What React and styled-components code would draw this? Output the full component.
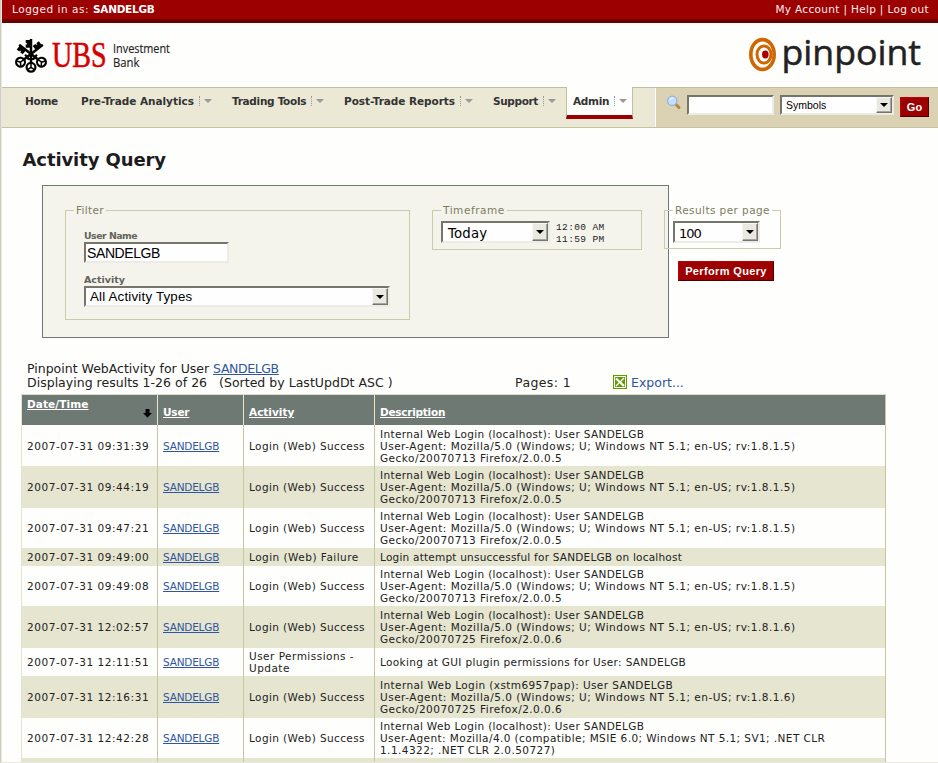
import React from "react";
import styled, { createGlobalStyle, css } from "styled-components";

const Global = createGlobalStyle`
  * { box-sizing: border-box; }
  html, body { margin: 0; background: #fefefc; overflow: hidden; }
  body { font-family: "DejaVu Sans", Verdana, sans-serif; font-size: 11px; color: #222; }
`;

const Page = styled.div`
  width: 938px;
  height: 763px;
  overflow: hidden;
  border-left: 1px solid #cfccc4;
  border-bottom: 1px solid #e9e7e1;
  box-shadow: inset 1px 0 0 #e9e7e1;
  padding-left: 1px;
  background: #fefefc;
`;

const TopBar = styled.header`
  height: 23px;
  background: #9c0000;
  border-bottom: 4px solid #6b0000;
  color: #f8eeee;
  display: flex;
  justify-content: space-between;
  padding: 0 9px 0 10px;
  line-height: 19px;
  white-space: pre;
`;
const LoggedIn = styled.div`
  font-size: 10.5px;
  letter-spacing: 0.53px;
  b { letter-spacing: -0.28px; color: #fff; }
`;
const AccountLinks = styled.div`
  font-size: 10.5px;
  letter-spacing: 0.33px;
`;

const Brand = styled.div`
  height: 64px;
  display: flex;
  justify-content: space-between;
  padding: 14px 15px 0 13px;
  svg { overflow: visible; }
`;

const Nav = styled.nav`
  height: 41px;
  display: flex;
  background: #ebe8d5;
  border-top: 1px solid #bfbf9a;
  border-bottom: 1px solid #c4c3a2;
`;
const NavItem = styled.div`
  width: ${(p) => p.$w}px;
  height: 26px;
  display: flex;
  align-items: center;
  font-weight: bold;
  font-size: 10.5px;
  line-height: 12px;
  color: #333;
  white-space: nowrap;
  letter-spacing: ${(p) => p.$ls || 0}px;
  ${(p) =>
    p.$active &&
    css`
      height: 32px;
      margin-top: -1px;
      padding: 0 0 0 6px;
      background: #fefefc;
      border: solid #bfbf9a;
      border-width: 0 1px;
      border-bottom: 4px solid #9c0000;
    `}
`;
const Dots = styled.i`
  height: 10px;
  margin-left: 5px;
  margin-right: 4px;
  border-left: 1px dotted #999;
`;
const Caret = styled.i`
  border: 4px solid transparent;
  border-top-color: #999;
  border-bottom: 0;
`;
const Search = styled.div`
  margin-left: auto;
  width: 283px;
  border-left: 1px solid #fefefc;
  background: #dbd2b3;
  display: flex;
  padding: 7px 0 0 10px;
`;
const Sunken = styled.div`
  width: ${(p) => p.$w}px;
  height: ${(p) => p.$h}px;
  flex: none;
  display: flex;
  align-items: center;
  background: #fefefe;
  border: 2px solid;
  border-color: #75756c #ecebe5 #ecebe5 #75756c;
  padding-left: ${(p) => p.$pad}px;
  font-family: "Liberation Sans", Arial, sans-serif;
  font-size: ${(p) => p.$size}px;
  line-height: 16px;
  letter-spacing: ${(p) => p.$ls || 0}px;
  color: #000;
  white-space: nowrap;
`;
const VerdanaSelect = styled(Sunken)`
  font-family: "DejaVu Sans", Verdana, sans-serif;
  > b { font-weight: normal; padding-top: 3px; }
`;
const SymbolSelect = styled(Sunken)`
  margin-left: 6px;
`;
const DropButton = styled.span`
  width: 16px;
  height: 100%;
  margin-left: auto;
  display: flex;
  align-items: center;
  justify-content: center;
  background: #e9e9e1;
  border: 1px solid;
  border-color: #f6f6f2 #75756c #75756c #f6f6f2;
  box-shadow: inset -1px -1px 0 #a5a59b;
  &::after {
    content: "";
    border: 4px solid transparent;
    border-top-color: #000;
    border-bottom: 0;
  }
`;
const RedButton = styled.button`
  width: ${(p) => p.$w}px;
  height: 20px;
  padding: 0;
  border: 1px solid;
  border-color: #c40000 #4c0000 #4c0000 #c40000;
  background: #9c0000;
  color: #fff;
  font: bold 11px/17px "Liberation Sans", Arial, sans-serif;
  letter-spacing: ${(p) => p.$ls || 0}px;
  margin: ${(p) => p.$margin};
`;

const Title = styled.h1`
  margin: 21px 0 0 20.5px;
  height: 36px;
  font-size: 18px;
  line-height: 22px;
  letter-spacing: -0.1px;
  color: #1c1c1c;
`;

const QueryArea = styled.div`
  display: flex;
  margin-left: 40px;
`;
const Panel = styled.div`
  width: 627px;
  height: 153px;
  display: flex;
  align-items: flex-start;
  gap: 22px;
  padding: 18px 0 0 22px;
  border: 1px solid #6f7973;
  background: #f4f4ec;
`;
const Group = styled.fieldset`
  width: ${(p) => p.$w}px;
  height: ${(p) => p.$h}px;
  margin: 0;
  min-width: 0;
  padding: 0 ${(p) => p.$pad}px;
  border: 1px solid #c9cbab;
  legend {
    height: 13px;
    margin-left: ${(p) => p.$legend}px;
    padding: 0 2px;
    font-size: 10.5px;
    line-height: 12px;
    color: #7d7d5c;
    letter-spacing: ${(p) => p.$ls}px;
  }
`;
const Label = styled.div`
  margin-top: ${(p) => p.$top}px;
  height: 12px;
  line-height: 12px;
  font-size: ${(p) => p.$size}px;
  font-weight: bold;
  color: #62625a;
  letter-spacing: ${(p) => p.$ls}px;
`;
const TimeRow = styled.div`
  display: flex;
  gap: 6px;
  padding-top: 4px;
`;
const Times = styled.div`
  font: 9.5px/12px "Liberation Mono", "Courier New", monospace;
  letter-spacing: 0.38px;
  color: #222;
  white-space: pre;
  padding-top: 1px;
`;
const ResultsColumn = styled.div`
  margin-left: -5px;
  padding-top: 19px;
`;

const Summary = styled.div`
  margin: 24px 0 0 25px;
  height: 32px;
  font-size: 12.5px;
  line-height: 14px;
  color: #222;
  white-space: pre;
`;
const SummaryRow = styled.div`
  display: flex;
`;
const SummaryCell = styled.span`
  width: ${(p) => p.$w}px;
  letter-spacing: ${(p) => p.$ls || 0}px;
`;
const Link = styled.a`
  color: #2d55a0;
  text-decoration: underline;
  letter-spacing: ${(p) => p.$ls || 0}px;
`;
const Export = styled.span`
  display: flex;
  gap: 4px;
  color: #2d55a0;
  svg { margin-top: -1px; }
`;

const Grid = styled.div`
  margin-left: 19px;
  width: 865px;
  border: 1px solid #c5c6a6;
  border-left-color: #e3e3cf;
  border-top-color: #dcdfc8;
`;
const Row = styled.div`
  display: grid;
  grid-template-columns: 136px 86px 131px 510px;
  height: ${(p) => p.$h}px;
  background: ${(p) => (p.$alt ? "#e5e5d0" : "#fefefc")};
`;
const Cell = styled.div`
  display: flex;
  flex-direction: column;
  justify-content: center;
  align-items: flex-start;
  padding-left: 5px;
  border-right: 1px solid #c5c6a6;
  line-height: 12px;
  font-size: 10.5px;
  color: #222;
  white-space: pre;
  letter-spacing: ${(p) => p.$ls || 0}px;
  &:last-child { border-right: 0; }
`;
const Line = styled.div`
  letter-spacing: ${(p) => p.$ls}px;
`;
const HeadRow = styled(Row)`
  background: #6f7974;
`;
const HeadCell = styled(Cell)`
  color: #fff;
  font-weight: bold;
  text-decoration: underline;
  flex-direction: row;
  justify-content: space-between;
  padding: ${(p) => (p.$sorted ? 3 : 11)}px 5px 0;
  border-right-color: #e5e5d0;
  svg { margin-top: 11px; }
`;

const rows = [
  [41, "09:31:39", "Success", "localhost", 5],
  [42, "09:44:19", "Success", "localhost", 5],
  [40, "09:47:21", "Success", "localhost", 5],
  [18, "09:49:00", "Failure", null, 0, "Login attempt unsuccessful for SANDELGB on localhost"],
  [40, "09:49:08", "Success", "localhost", 5],
  [42, "12:02:57", "Success", "localhost", 6],
  [28, "12:11:51", null, null, 0, "Looking at GUI plugin permissions for User: SANDELGB"],
  [42, "12:16:31", "Success", "xstm6957pap", 6],
  [40, "12:42:28", "Success", "localhost", 0],
  [40, "", "", null, 0, ""],
];

function Description({ host, version, text }) {
  if (text !== undefined) {
    return <Line $ls={text.startsWith("Looking") ? 0.34 : 0.22}>{text}</Line>;
  }
  const agent = version
    ? `Mozilla/5.0 (Windows; U; Windows NT 5.1; en-US; rv:1.8.1.${version})`
    : "Mozilla/4.0 (compatible; MSIE 6.0; Windows NT 5.1; SV1; .NET CLR";
  const tail = version
    ? `Gecko/200707${version === 5 ? "13" : "25"} Firefox/2.0.0.${version}`
    : "1.1.4322; .NET CLR 2.0.50727)";
  return (
    <>
      <Line $ls={host === "localhost" ? 0.34 : 0.4}>{`Internal Web Login (${host}): User SANDELGB`}</Line>
      <Line $ls={version ? 0.49 : 0.42}>{`User-Agent: ${agent}`}</Line>
      <Line $ls={version ? 0.48 : 0.44}>{tail}</Line>
    </>
  );
}

function Key({ angle }) {
  return (
    <g transform={`rotate(${angle} 16 16.5)`}>
      <path d="M16 1.500v24" stroke="#000" strokeWidth="2.5" />
      <path d="M15.500 2.500h-4.800v3.200h1.400v1.200h-1.400v3.300h4.800zM12.800 20.500h6.400v2h-6.400z" />
      <circle cx="16" cy="29.800" r="4.400" fill="none" stroke="#000" strokeWidth="2.2" />
      <path d="M16 25v4.800M16 29.800l-3.800 2.600M16 29.800l3.800 2.600" stroke="#000" strokeWidth="1.5" />
    </g>
  );
}

function UbsLogo() {
  return (
    <svg width="165" height="40" viewBox="0 0 165 40">
      <g transform="translate(0 .5)">
        <Key angle={52} />
        <Key angle={-52} />
        <Key angle={0} />
      </g>
      <text transform="translate(37 30) scale(.79 1)" fontFamily="Liberation Serif, serif" fontSize="35.5" fill="#d60000" stroke="#d60000" strokeWidth=".6">UBS</text>
      <g fontFamily="Open Sans, sans-serif" fontSize="11.8" fill="#222" stroke="#222" strokeWidth=".15">
        <text x="98" y="16" textLength="57" lengthAdjust="spacingAndGlyphs">Investment</text>
        <text x="98" y="30" textLength="26.5" lengthAdjust="spacingAndGlyphs">Bank</text>
      </g>
    </svg>
  );
}

function PinpointLogo() {
  return (
    <svg width="176" height="44" viewBox="0 0 176 44">
      <g fill="none" stroke="#cf6600">
        <ellipse cx="15.5" cy="17.5" rx="11.7" ry="14.9" strokeWidth="3.6" />
        <ellipse cx="17" cy="17.5" rx="7" ry="8.6" strokeWidth="3" />
      </g>
      <ellipse cx="18.3" cy="17.5" rx="3.3" ry="4.1" fill="#a80000" />
      <text x="34.5" y="28" fontFamily="Open Sans, sans-serif" fontSize="34.5" fill="#222" stroke="#222" strokeWidth=".5" textLength="139.5" lengthAdjust="spacingAndGlyphs">pinpoint</text>
    </svg>
  );
}

function Magnifier() {
  return (
    <svg width="21" height="18" viewBox="0 0 21 18">
      <path d="M9.500 9l3.500 3.500" stroke="#b98645" strokeWidth="3" strokeLinecap="round" />
      <circle cx="6.2" cy="5.8" r="4.7" fill="#c5dfff" stroke="#9cb5dc" strokeWidth="1.4" />
      <path d="M4 5q1-2 3-2" stroke="#fff" fill="none" />
    </svg>
  );
}

function ExcelIcon() {
  return (
    <svg width="14" height="14" viewBox="0 0 14 14">
      <path fill="#639c00" d="M0 0h14v14H0z" />
      <path fill="none" stroke="#fff" d="M1.500 1.500h11v11h-11z" />
      <path fill="#639c00" d="M2 2h9.500v10H2z" />
      <path d="M3 3.500l8 7.500" stroke="#fff" strokeWidth="2.2" />
      <path d="M11 3l-8 8" stroke="#fff" strokeWidth="1.2" />
    </svg>
  );
}

function Menu({ w, ls, active, children }) {
  return (
    <NavItem $w={w} $ls={ls} $active={active}>
      {children}
      <Dots />
      <Caret />
    </NavItem>
  );
}

export default function App() {
  return (
    <Page>
      <Global />
      <TopBar>
        <LoggedIn>Logged in as: <b>SANDELGB</b></LoggedIn>
        <AccountLinks>My Account | Help | Log out</AccountLinks>
      </TopBar>
      <Brand>
        <UbsLogo />
        <PinpointLogo />
      </Brand>
      <Nav>
        <NavItem $w={23} />
        <NavItem $w={56} $ls={-0.3}>Home</NavItem>
        <Menu w={151} ls={-0.04}>Pre-Trade Analytics</Menu>
        <Menu w={112} ls={-0.3}>Trading Tools</Menu>
        <Menu w={149} ls={-0.05}>Post-Trade Reports</Menu>
        <Menu w={73} ls={-0.35}>Support</Menu>
        <Menu w={67} ls={-0.3} active>Admin</Menu>
        <Search>
          <Magnifier />
          <Sunken $w={87} $h={20} />
          <SymbolSelect $w={114} $h={20} $size={10.5} $pad={4}>
            Symbols<DropButton />
          </SymbolSelect>
          <RedButton $w={29} $margin="2px 0 0 6px">Go</RedButton>
        </Search>
      </Nav>
      <Title>Activity Query</Title>
      <QueryArea>
        <Panel>
          <Group $w={345} $h={116} $pad={18} $legend={-10} $ls={0.3}>
            <legend>Filter</legend>
            <Label $top={13} $size={9.3} $ls={-0.45}>User Name</Label>
            <Sunken $w={145} $h={21} $size={14} $pad={1} $ls={-0.4}>SANDELGB</Sunken>
            <Label $top={11} $size={9.5} $ls={0}>Activity</Label>
            <Sunken $w={306} $h={21} $size={13.3} $pad={4} $ls={0.2}>
              All Activity Types<DropButton />
            </Sunken>
          </Group>
          <Group $w={210} $h={46} $pad={8} $legend={0} $ls={0.55}>
            <legend>Timeframe</legend>
            <TimeRow>
              <VerdanaSelect $w={109} $h={22} $size={13.3} $pad={5} $ls={0.15}>
                <b>Today</b><DropButton />
              </VerdanaSelect>
              <Times>{"12:00 AM\n11:59 PM"}</Times>
            </TimeRow>
          </Group>
        </Panel>
        <ResultsColumn>
          <Group $w={117} $h={45} $pad={8} $legend={0} $ls={0.42}>
            <legend>Results per page</legend>
            <TimeRow>
              <VerdanaSelect $w={87} $h={22} $size={13} $pad={4} $ls={-1}>
                <b>100</b><DropButton />
              </VerdanaSelect>
            </TimeRow>
          </Group>
          <RedButton $w={96} $ls={0.36} $margin="12px 0 0 14px">Perform Query</RedButton>
        </ResultsColumn>
      </QueryArea>
      <Summary>
        <SummaryRow>Pinpoint WebActivity for User <Link $ls={-0.4}>SANDELGB</Link></SummaryRow>
        <SummaryRow>
          <SummaryCell $w={488} $ls={0.02}>Displaying results 1-26 of 26   (Sorted by LastUpdDt ASC )</SummaryCell>
          <SummaryCell $w={98} $ls={0.4}>Pages: 1</SummaryCell>
          <Export><ExcelIcon />Export...</Export>
        </SummaryRow>
      </Summary>
      <Grid>
        <HeadRow $h={30}>
          <HeadCell $sorted $ls={0.1}>
            Date/Time
            <svg width="9" height="9" viewBox="0 0 9 9"><path d="M2.500 0h4v4H9L4.500 8.500 0 4h2.500z" fill="#000" /></svg>
          </HeadCell>
          <HeadCell $ls={-0.2}>User</HeadCell>
          <HeadCell>Activity</HeadCell>
          <HeadCell $ls={-0.25}>Description</HeadCell>
        </HeadRow>
        {rows.map(([h, time, result, host, version, text], i) => (
          <Row key={i} $h={h} $alt={i % 2 === 1}>
            <Cell $ls={0.56}>{time && `2007-07-31 ${time}`}</Cell>
            <Cell>{time && <Link $ls={-0.2}>SANDELGB</Link>}</Cell>
            <Cell $ls={result === "Success" ? 0.4 : 0.48}>
              {result === null ? "User Permissions -\nUpdate" : result && `Login (Web) ${result}`}
            </Cell>
            <Cell><Description host={host} version={version} text={text} /></Cell>
          </Row>
        ))}
      </Grid>
    </Page>
  );
}
